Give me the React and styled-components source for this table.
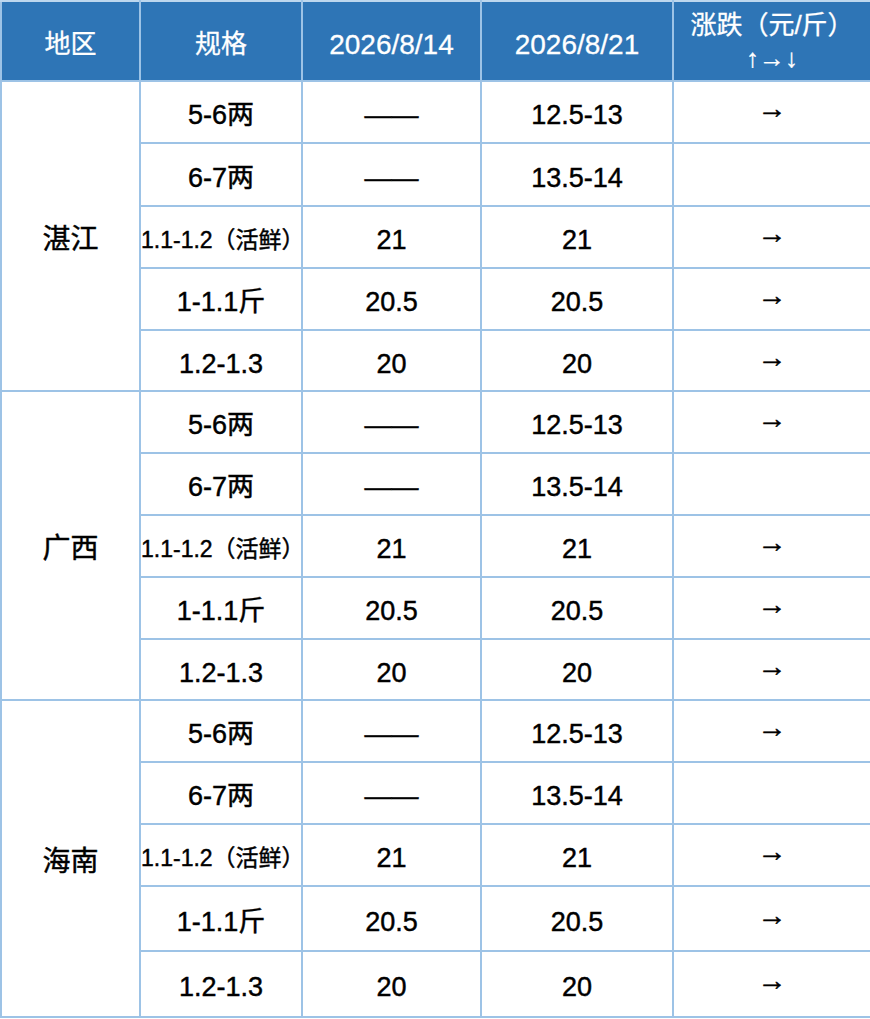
import React from "react";
import styled, { createGlobalStyle } from "styled-components";

const GlobalStyle = createGlobalStyle`
  body {
    margin: 0;
    background: #ffffff;
  }
`;

const Table = styled("table")`
  width: 870px;
  border-collapse: collapse;
  table-layout: fixed;
  font-family: "Liberation Sans", "Noto Sans CJK SC", sans-serif;
  color: #000;
`;

const HeadCell = styled("th")`
  background-color: #2e75b6;
  color: #ffffff;
  font-weight: normal;
  font-size: ${(p) => p.size || 28}px;
  border: 2px solid #9dc3e6;
  border-top-color: #bdd7ee;
  padding: ${(p) => (p.$stacked ? "0" : "8px 0 0")};
  text-align: center;
  vertical-align: middle;
  white-space: nowrap;
  line-height: 1.15;
  -webkit-text-stroke: 0.3px #ffffff;
`;

const SubLine = styled("div")`
  font-size: 26px;
  line-height: 26px;
  margin-top: 4px;
`;

const Cell = styled("td")`
  border: 2px solid #9dc3e6;
  padding: ${(p) => (p.$arrow ? "0 0 7px" : "7px 0 0")};
  text-align: center;
  vertical-align: middle;
  white-space: nowrap;
  font-size: ${(p) => p.size || 27}px;
  line-height: 1.2;
  -webkit-text-stroke: 0.45px #000;
`;

const Arrow = styled("span")`
  font-size: 29px;
  -webkit-text-stroke: 0.5px #000;
`;

const Row = styled("tr")`
  height: ${(p) => p.h}px;
`;

const HeadRow = styled("tr")`
  height: 80px;
`;

const specs = [
  { spec: "5-6两", a: "——", b: "12.5-13", t: "→" },
  { spec: "6-7两", a: "——", b: "13.5-14", t: "" },
  { spec: "1.1-1.2（活鲜）", small: true, a: "21", b: "21", t: "→" },
  { spec: "1-1.1斤", a: "20.5", b: "20.5", t: "→" },
  { spec: "1.2-1.3", a: "20", b: "20", t: "→" },
];

const regions = [
  { name: "湛江", heights: [62, 63, 62, 62, 61] },
  { name: "广西", heights: [62, 62, 62, 62, 61] },
  { name: "海南", heights: [62, 62, 62, 65, 66] },
];

const App = () => {
  return (
    <>
      <GlobalStyle />
      <Table>
        <colgroup>
          <col style={{ width: 139 }} />
          <col style={{ width: 162 }} />
          <col style={{ width: 179 }} />
          <col style={{ width: 192 }} />
          <col style={{ width: 198 }} />
        </colgroup>
        <thead>
          <HeadRow>
            <HeadCell size={26}>地区</HeadCell>
            <HeadCell size={26}>规格</HeadCell>
            <HeadCell>2026/8/14</HeadCell>
            <HeadCell>2026/8/21</HeadCell>
            <HeadCell size={26} $stacked>
              涨跌（元/斤）
              <SubLine>↑→↓</SubLine>
            </HeadCell>
          </HeadRow>
        </thead>
        <tbody>
          {regions.map((region) =>
            specs.map((item, i) => (
              <Row key={region.name + i} h={region.heights[i]}>
                {i === 0 && (
                  <Cell rowSpan={specs.length} size={28}>
                    {region.name}
                  </Cell>
                )}
                <Cell size={item.small ? 23 : 27}>{item.spec}</Cell>
                <Cell>{item.a}</Cell>
                <Cell>{item.b}</Cell>
                <Cell $arrow>{item.t && <Arrow>{item.t}</Arrow>}</Cell>
              </Row>
            ))
          )}
        </tbody>
      </Table>
    </>
  );
};

export default App;
